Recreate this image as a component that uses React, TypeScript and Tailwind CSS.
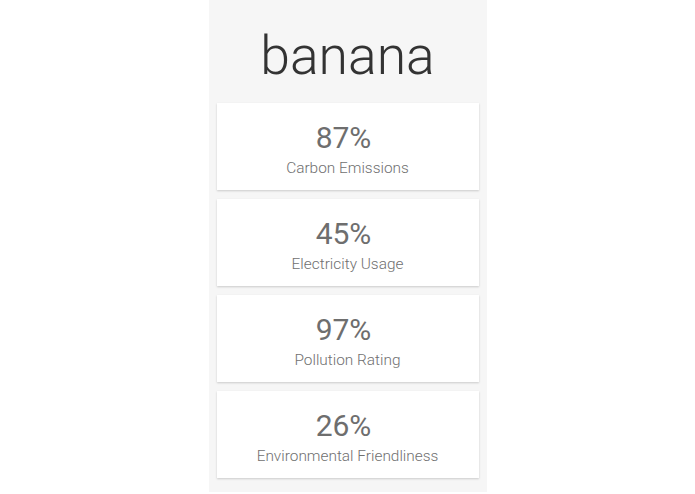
import React from "react";

const STATS = [
  { value: "87%", label: "Carbon Emissions" },
  { value: "45%", label: "Electricity Usage" },
  { value: "97%", label: "Pollution Rating" },
  { value: "26%", label: "Environmental Friendliness" },
];

export default function App() {
  return (
    <div className="min-h-screen w-full bg-white flex justify-center" style={{ fontFamily: "Roboto, 'Liberation Sans', sans-serif" }}>
      <div className="w-[278px] self-start bg-[#f6f6f6] px-2 pt-[28px] pb-[14px] flex flex-col">
        <h1 className="text-[53.5px] leading-[55px] font-light text-[#333333] text-center h-[55px] mb-[20px]">banana</h1>
        <div className="flex flex-col gap-[9px]">
          {STATS.map((s) => (
            <div
              key={s.label}
              className="h-[87px] bg-white shadow-[0_1px_2px_rgba(0,0,0,0.18)] flex flex-col items-center pt-[17px]"
            >
              <span className="text-[30px] leading-[36px] text-[#6e6e6e] pr-[8px]">{s.value}</span>
              <span className="text-[15.4px] leading-[24px] font-light text-[#707070]">{s.label}</span>
            </div>
          ))}
        </div>
      </div>
    </div>
  );
}
